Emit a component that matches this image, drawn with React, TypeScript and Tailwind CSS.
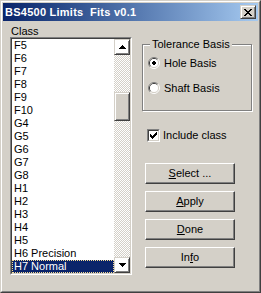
import React from "react";

const items = [
  "F5",
  "F6",
  "F7",
  "F8",
  "F9",
  "F10",
  "G4",
  "G5",
  "G6",
  "G7",
  "G8",
  "H1",
  "H2",
  "H3",
  "H4",
  "H5",
  "H6 Precision",
  "H7 Normal",
];

// classic 3D edges
const raised =
  "border border-t-[#d4d0c8] border-l-[#d4d0c8] border-r-[#404040] border-b-[#404040] shadow-[inset_1px_1px_0_#fff,inset_-1px_-1px_0_#808080]";
const pushButton =
  "border border-t-white border-l-white border-r-[#404040] border-b-[#404040] shadow-[inset_-1px_-1px_0_#808080]";

const Arrow = ({ down }: { down?: boolean }) => (
  <svg width="7" height="4" viewBox="0 0 7 4" shapeRendering="crispEdges">
    {down ? (
      <path d="M0 0h7v1h-1v1h-1v1h-1v1h-1v-1h-1v-1h-1v-1h-1z" fill="#000" />
    ) : (
      <path d="M3 0h1v1h1v1h1v1h1v1H0V3h1V2h1V1h1z" fill="#000" />
    )}
  </svg>
);

const CloseGlyph = () => (
  <svg width="8" height="7" viewBox="0 0 8 7" shapeRendering="crispEdges">
    <path
      d="M0 0h2v1h1v1h2v-1h1v-1h2v1h-1v1h-1v1h-1v1h1v1h1v1h1v1h-2v-1h-1v-1h-2v1h-1v1H0v-1h1v-1h1v-1h1V3H2V2H1V1H0z"
      fill="#000"
    />
  </svg>
);

const Radio = ({ checked }: { checked?: boolean }) => (
  <svg width="12" height="12" viewBox="0 0 12 12">
    <path d="M2.11 9.89A5.5 5.5 0 0 1 9.89 2.11" stroke="#808080" fill="none" />
    <path d="M9.89 2.11A5.5 5.5 0 0 1 2.11 9.89" stroke="#fff" fill="none" />
    <path d="M2.82 9.18A4.5 4.5 0 0 1 9.18 2.82" stroke="#404040" fill="none" />
    <path d="M9.18 2.82A4.5 4.5 0 0 1 2.82 9.18" stroke="#d4d0c8" fill="none" />
    <circle cx="6" cy="6" r="4" fill="#fff" />
    {checked && (
      <path d="M5 4h2v1h1v2h-1v1h-2v-1h-1v-2h1z" fill="#000" shapeRendering="crispEdges" />
    )}
  </svg>
);

const CheckBox = () => (
  <div className="w-[13px] h-[13px] border border-t-[#808080] border-l-[#808080] border-r-white border-b-white">
    <div className="w-full h-full bg-white border border-t-[#404040] border-l-[#404040] border-r-[#d4d0c8] border-b-[#d4d0c8] flex items-center justify-center">
      <svg width="7" height="7" viewBox="0 0 7 7" shapeRendering="crispEdges">
        <path
          d="M6 0h1v3h-1v1h-1v1h-1v1h-1v1h-1v-1h-1v-1H0V2h1v1h1v1h1V3h1V2h1V1h1z"
          fill="#000"
        />
      </svg>
    </div>
  </div>
);

const PushButton = ({ children }: { children: React.ReactNode }) => (
  <div
    className={`${pushButton} w-[90px] h-[21px] flex items-center justify-center leading-[13px] text-black`}
  >
    <span>{children}</span>
  </div>
);

const ClassList = () => (
  <div className="w-[122px] h-[238px] border border-t-[#808080] border-l-[#808080] border-r-white border-b-white">
    <div className="h-full flex bg-white border border-t-[#404040] border-l-[#404040] border-r-[#d4d0c8] border-b-[#d4d0c8]">
      <div className="flex-1 flex flex-col overflow-hidden">
        {items.map((item, i) =>
          i === items.length - 1 ? (
            <div
              key={item}
              className="h-[13px] leading-[11px] pl-[1px] whitespace-nowrap bg-[#0a246a] text-white border border-dotted border-[#f5db95]"
            >
              {item}
            </div>
          ) : (
            <div key={item} className="h-[13px] leading-[13px] pl-[2px] whitespace-nowrap text-black">
              {item}
            </div>
          )
        )}
      </div>
      <div className="w-[16px] flex flex-col">
        <div className={`${raised} h-[16px] flex items-center justify-center`}>
          <Arrow />
        </div>
        <div className="flex-1 flex flex-col bg-[image:repeating-conic-gradient(#fff_0_25%,#d4d0c8_0_50%)] bg-[length:2px_2px]">
          <div className="h-[37px]" />
          <div className={`${raised} h-[29px] bg-[#d4d0c8]`} />
        </div>
        <div className={`${raised} h-[16px] flex items-center justify-center`}>
          <Arrow down />
        </div>
      </div>
    </div>
  </div>
);

export default function App() {
  return (
    <div className="w-[261px] h-[293px] bg-[#d4d0c8] font-['Liberation_Sans',Arial,sans-serif] text-[11px] border border-t-[#d4d0c8] border-l-[#d4d0c8] border-r-[#404040] border-b-[#404040]">
      <div className="h-full border border-t-white border-l-white border-r-[#808080] border-b-[#808080] p-[1px] flex flex-col">
        {/* title bar */}
        <div className="h-[18px] flex items-center justify-between pl-[2px] pr-[2px] bg-linear-to-r from-[#0a246a] to-[#a6caf0]">
          <span className="font-bold text-white whitespace-pre tracking-[0.25px] leading-[13px]">
            BS4500 Limits  Fits v0.1
          </span>
          <div className={`${raised} w-[16px] h-[14px] bg-[#d4d0c8] flex items-center justify-center`}>
            <CloseGlyph />
          </div>
        </div>

        {/* client */}
        <div className="flex-1 flex pl-[7px] gap-[10px] text-black">
          <div className="flex flex-col pt-[4px]">
            <div className="h-[12px] leading-[12px] pl-[1px]">Class</div>
            <ClassList />
          </div>

          <div className="flex flex-col pt-[23px]">
            <div className="relative w-[110px] h-[67px] border border-[#808080] shadow-[1px_1px_0_#fff,inset_1px_1px_0_#fff]">
              <span className="absolute left-[7px] top-[-7px] px-[2px] bg-[#d4d0c8] leading-[13px]">
                Tolerance Basis
              </span>
              <div className="flex flex-col pt-[10px] pl-[5px] gap-[9px]">
                <div className="h-[16px] flex items-center gap-[4px]">
                  <Radio checked />
                  <span className="leading-[13px]">Hole Basis</span>
                </div>
                <div className="h-[16px] flex items-center gap-[4px]">
                  <Radio />
                  <span className="leading-[13px]">Shaft Basis</span>
                </div>
              </div>
            </div>

            <div className="mt-[17px] h-[15px] pl-[5px] flex items-center gap-[3px]">
              <CheckBox />
              <span className="leading-[13px]">Include class</span>
            </div>

            <div className="mt-[20px] ml-[3px] flex flex-col gap-[7px]">
              <PushButton>
                <span className="underline">S</span>elect ...
              </PushButton>
              <PushButton>
                <span className="underline">A</span>pply
              </PushButton>
              <PushButton>
                <span className="underline">D</span>one
              </PushButton>
              <PushButton>
                In<span className="underline">f</span>o
              </PushButton>
            </div>
          </div>
        </div>
      </div>
    </div>
  );
}
